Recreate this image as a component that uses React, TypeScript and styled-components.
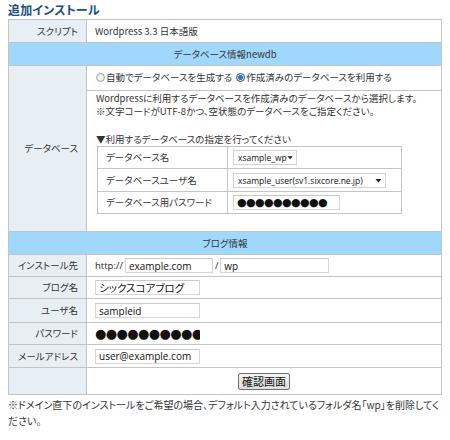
import styled, { createGlobalStyle } from "styled-components";

const GlobalStyle = createGlobalStyle`
  html, body {
    margin: 0;
    padding: 0;
    background: #ffffff;
  }
  body {
    font-family: "Noto Sans CJK JP", "Noto Sans", sans-serif;
    font-feature-settings: "palt";
    font-size: 9.5px;
    line-height: 13px;
    color: #333333;
  }
`;

const Page = styled.div`
  width: 434px;
  padding: 0 8px;
`;

const Title = styled.h2`
  margin: 0;
  height: 19px;
  line-height: 20px;
  font-size: 12px;
  font-weight: bold;
  color: #1d4d7e;
  letter-spacing: 0.2px;
`;

const FormTable = styled.table`
  width: 434px;
  border-collapse: collapse;
  border: 1px solid #c4c4c4;
  table-layout: fixed;
`;

const LabelCell = styled.th<{ $h?: number }>`
  width: 78px;
  height: ${(p) => p.$h ?? 22}px;
  padding: 0 8px 0 0;
  background: #e7eef4;
  border: 1px solid #c4c4c4;
  text-align: right;
  font-weight: normal;
  vertical-align: middle;
  box-sizing: border-box;
`;

const ValueCell = styled.td<{ $center?: boolean }>`
  padding: 0 8px;
  background: #ffffff;
  border: 1px solid #c4c4c4;
  vertical-align: middle;
  text-align: ${(p) => (p.$center ? "center" : "left")};
`;

const SectionHeader = styled.th`
  height: 22px;
  padding: 0;
  background: #9fd8fc;
  border: 1px solid #c4c4c4;
  font-weight: normal;
  text-align: center;
  color: #333333;
`;

const RadioCell = styled.td`
  height: 24px;
  padding: 0 8px 0 9px;
  border: 1px solid #c4c4c4;
  vertical-align: middle;
`;

const DbCell = styled.td`
  padding: 1px 8px 17px 9px;
  border: 1px solid #c4c4c4;
  vertical-align: top;
`;

const Para = styled.p<{ $gap?: number }>`
  margin: 0 0 ${(p) => p.$gap ?? 0}px 0;
  white-space: nowrap;
`;

const RadioLabel = styled.label`
  display: inline-flex;
  align-items: center;
  margin-right: 4px;
`;

const Radio = styled.span<{ $checked?: boolean }>`
  display: inline-block;
  width: 9px;
  height: 9px;
  margin-right: 1px;
  border-radius: 50%;
  box-sizing: border-box;
  border: 1px solid ${(p) => (p.$checked ? "#3a4d66" : "#a8a8a8")};
  background: ${(p) =>
    p.$checked
      ? "radial-gradient(circle, #2a78d6 0 2.2px, #dce6f2 2.6px)"
      : "radial-gradient(circle, #f4f4f4 0 2px, #d8d8d8 4px)"};
`;

const InnerTable = styled.table`
  width: 305px;
  margin-left: 1px;
  border-collapse: collapse;
  border: 1px solid #c4c4c4;
  table-layout: fixed;
`;

const InnerLabel = styled.td<{ $h?: number }>`
  width: 130px;
  height: ${(p) => p.$h ?? 22}px;
  padding: 0 0 0 8px;
  border: 1px solid #c4c4c4;
  box-sizing: border-box;
`;

const InnerValue = styled.td`
  padding: 0 5px;
  border: 1px solid #c4c4c4;
`;

const SelectBox = styled.div<{ $w: number }>`
  display: flex;
  align-items: center;
  justify-content: space-between;
  width: ${(p) => p.$w}px;
  height: 15px;
  padding: 0 3px 0 4px;
  box-sizing: border-box;
  border: 1px solid #d4d4d4;
  background: #ffffff;
  font-family: "Open Sans", "Noto Sans", sans-serif;
  font-size: 8.5px;
  color: #111111;
  white-space: nowrap;
`;

const Field = styled.input<{ $w: number; $dots?: number }>`
  display: block;
  width: ${(p) => p.$w}px;
  height: 15px;
  padding: 0 3px;
  margin: 0;
  box-sizing: border-box;
  border: 1px solid #d6d6d6;
  border-top-color: #c8c8c8;
  background: #ffffff;
  font-family: ${(p) => (p.$dots ? '"DejaVu Sans", sans-serif' : '"Open Sans", "Noto Sans CJK JP", sans-serif')};
  font-size: ${(p) => (p.$dots ? `${p.$dots}px` : "10px")};
  letter-spacing: ${(p) => (p.$dots ? "-0.6px" : "0")};
  color: #111111;
  outline: none;
`;

const JpField = styled(Field)`
  font-family: "Noto Sans CJK JP", sans-serif;
  font-feature-settings: "palt";
  font-size: 10.5px;
`;

const DotField = styled(Field)`
  border: none;
  padding: 0;
`;

const InstallLine = styled.div`
  display: flex;
  align-items: center;
  gap: 2px;
  font-family: "Open Sans", "Noto Sans", sans-serif;
  font-size: 9.5px;
  color: #222222;
`;

const SubmitButton = styled.button`
  display: block;
  margin: 0 auto;
  height: 17px;
  padding: 0 3px;
  font-family: "Noto Sans CJK JP", sans-serif;
  font-size: 11px;
  line-height: 13px;
  color: #111111;
  border: 1px solid #707070;
  border-radius: 2px;
  background: linear-gradient(#f4f4f4, #dedede);
  cursor: pointer;
`;

const Note = styled.p`
  margin: 2px 0 0 0;
  width: 436px;
  font-size: 10px;
  line-height: 16px;
`;

function Caret() {
  return (
    <svg width="7" height="5" viewBox="0 0 7 5">
      <path d="M0.5 1 L6.5 1 L3.5 4.5 Z" fill="#222" />
    </svg>
  );
}

const blogRows = [
  { label: "ブログ名", value: "シックスコアブログ", kind: "jp", h: 22 },
  { label: "ユーザ名", value: "sampleid", kind: "text", h: 24 },
  { label: "パスワード", value: "●●●●●●●●●●●", kind: "dots", h: 22 },
  { label: "メールアドレス", value: "user@example.com", kind: "text", h: 23 },
];

export default function App() {
  return (
    <>
      <GlobalStyle />
      <Page>
        <Title>追加インストール</Title>
        <FormTable>
          <tbody>
            <tr>
              <LabelCell $h={23}>スクリプト</LabelCell>
              <ValueCell>Wordpress 3.3 日本語版</ValueCell>
            </tr>
            <tr>
              <SectionHeader colSpan={2}>データベース情報newdb</SectionHeader>
            </tr>
            <tr>
              <LabelCell rowSpan={2}>データベース</LabelCell>
              <RadioCell>
                <RadioLabel>
                  <Radio />
                  自動でデータベースを生成する
                </RadioLabel>
                <RadioLabel>
                  <Radio $checked />
                  作成済みのデータベースを利用する
                </RadioLabel>
              </RadioCell>
            </tr>
            <tr>
              <DbCell>
                <Para>Wordpressに利用するデータベースを作成済みのデータベースから選択します。</Para>
                <Para $gap={15}>※文字コードがUTF-8かつ、空状態のデータベースをご指定ください。</Para>
                <Para>▼利用するデータベースの指定を行ってください</Para>
                <InnerTable>
                  <tbody>
                    <tr>
                      <InnerLabel>データベース名</InnerLabel>
                      <InnerValue>
                        <SelectBox $w={64}>
                          xsample_wp
                          <Caret />
                        </SelectBox>
                      </InnerValue>
                    </tr>
                    <tr>
                      <InnerLabel $h={23}>データベースユーザ名</InnerLabel>
                      <InnerValue>
                        <SelectBox $w={153}>
                          xsample_user(sv1.sixcore.ne.jp)
                          <Caret />
                        </SelectBox>
                      </InnerValue>
                    </tr>
                    <tr>
                      <InnerLabel>データベース用パスワード</InnerLabel>
                      <InnerValue>
                        <Field $w={107} $dots={11} readOnly value="●●●●●●●●●●" />
                      </InnerValue>
                    </tr>
                  </tbody>
                </InnerTable>
              </DbCell>
            </tr>
            <tr>
              <SectionHeader colSpan={2}>ブログ情報</SectionHeader>
            </tr>
            <tr>
              <LabelCell $h={22}>インストール先</LabelCell>
              <ValueCell>
                <InstallLine>
                  http://
                  <Field $w={88} readOnly value="example.com" />/
                  <Field $w={109} readOnly value="wp" />
                </InstallLine>
              </ValueCell>
            </tr>
            {blogRows.map((row) => (
              <tr key={row.label}>
                <LabelCell $h={row.h}>{row.label}</LabelCell>
                <ValueCell>
                  {row.kind === "jp" ? (
                    <JpField $w={105} readOnly value={row.value} />
                  ) : row.kind === "dots" ? (
                    <DotField $w={105} $dots={13} readOnly value={row.value} />
                  ) : (
                    <Field $w={105} readOnly value={row.value} />
                  )}
                </ValueCell>
              </tr>
            ))}
            <tr>
              <LabelCell $h={27} />
              <ValueCell $center>
                <SubmitButton type="button">確認画面</SubmitButton>
              </ValueCell>
            </tr>
          </tbody>
        </FormTable>
        <Note>※ドメイン直下のインストールをご希望の場合、デフォルト入力されているフォルダ名「wp」を削除してください。</Note>
      </Page>
    </>
  );
}
